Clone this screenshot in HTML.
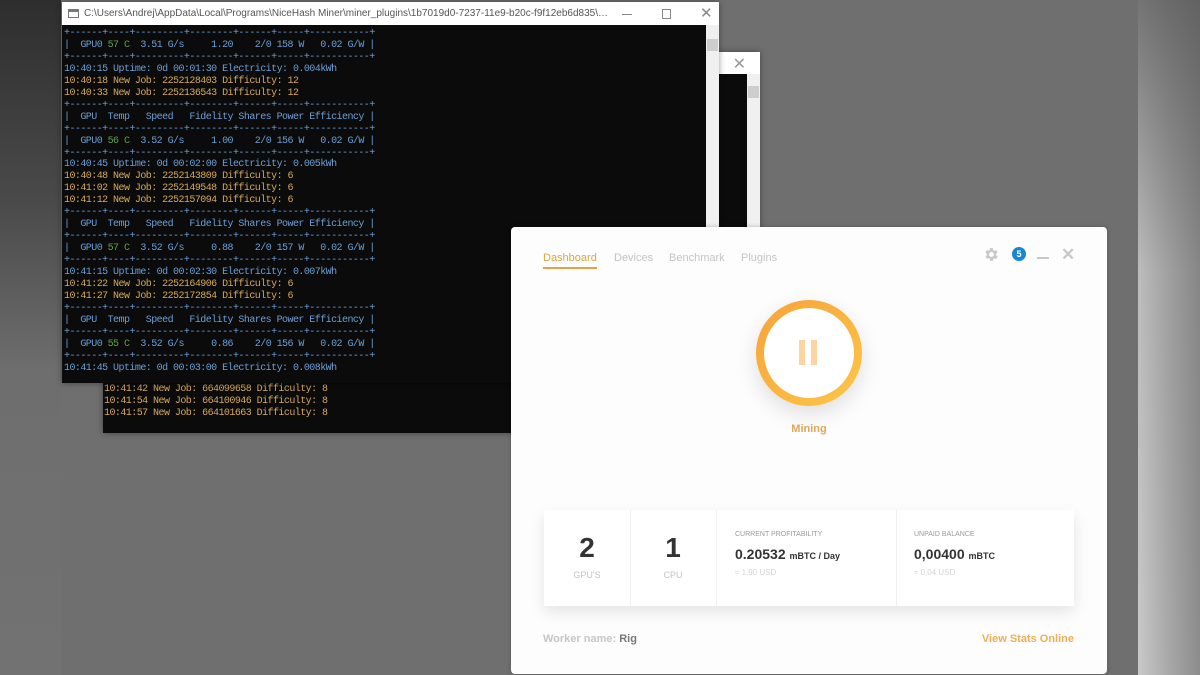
<!DOCTYPE html>
<html><head><meta charset="utf-8"><style>
*{margin:0;padding:0;box-sizing:border-box}
body{width:1200px;height:675px;overflow:hidden;background:#6f6f6f;position:relative;font-family:"Liberation Sans",sans-serif}
.lstrip{position:absolute;left:0;top:0;width:61px;height:675px;background:linear-gradient(180deg,#2e2e2e 0%,#4a4a4a 30%,#6e6e6e 55%,#727272 100%)}
.rstrip{position:absolute;left:1138px;top:0;width:62px;height:675px;background:linear-gradient(90deg,#c9c9c9 0%,#a8a8a8 50%,#8c8c8c 100%)}
.rstrip:after{content:"";position:absolute;inset:0;background:linear-gradient(180deg,rgba(80,80,80,.7) 0%,rgba(80,80,80,.1) 40%,rgba(0,0,0,0) 100%)}
.win{position:absolute;background:#fff;box-shadow:0 0 6px rgba(0,0,0,.4)}
.con{position:absolute;background:#0b0b0b}
.sb{position:absolute;background:#f0f0f0}
pre{font-family:"Liberation Mono",monospace;font-size:10px;letter-spacing:-0.55px;line-height:11.96px;color:#6b9fd8;white-space:pre}
.y{color:#d6a95c}.g{color:#5fa24e}
.title{position:absolute;left:22px;top:6px;width:528px;overflow:hidden;text-overflow:ellipsis;font-size:10px;color:#555;white-space:nowrap}
.nh{position:absolute;left:511px;top:227px;width:596px;height:447px;background:#fdfdfd;border-radius:4px;box-shadow:0 0 4px rgba(0,0,0,.25)}
.tab{position:absolute;top:25px;font-size:11px;color:#c4c4c4}
</style></head><body>
<div class="lstrip"></div><div class="rstrip"></div>

<!-- console 2 -->
<div class="win" style="left:103px;top:52px;width:657px;height:381px">
  <div style="position:absolute;right:14px;top:2px;font-size:16px;color:#999">✕</div>
  <div class="con" style="left:0;top:22px;width:644px;height:359px">
    <pre style="position:absolute;left:1px;top:310px" class="y">10:41:42 New Job: 664099658 Difficulty: 8
10:41:54 New Job: 664100946 Difficulty: 8
10:41:57 New Job: 664101663 Difficulty: 8</pre>
  </div>
  <div class="sb" style="left:644px;top:22px;width:13px;height:359px"><div style="margin:12px 1px 0;height:12px;background:#cdcdcd"></div></div>
</div>

<!-- console 1 -->
<div class="win" style="left:62px;top:2px;width:657px;height:381px">
  <div style="position:absolute;left:6px;top:7px;width:11px;height:9px;border:1px solid #777;border-top-width:3px"></div>
  <div class="title">C:\Users\Andrej\AppData\Local\Programs\NiceHash Miner\miner_plugins\1b7019d0-7237-11e9-b20c-f9f12eb6d835\bins\6.3\miner...</div>
  <div style="position:absolute;left:560px;top:12px;width:10px;height:1px;background:#888"></div>
  <div style="position:absolute;left:600px;top:7px;width:9px;height:10px;border:1px solid #888"></div>
  <div style="position:absolute;left:638px;top:2px;font-size:15px;color:#888">✕</div>
  <div class="con" style="left:0;top:23px;width:644px;height:358px">
<pre style="position:absolute;left:2px;top:3px">+------+----+---------+--------+------+-----+-----------+
|  GPU0 <span class="g">57 C</span>  3.51 G/s     1.20    2/0 158 W   0.02 G/W |
+------+----+---------+--------+------+-----+-----------+
10:40:15 Uptime: 0d 00:01:30 Electricity: 0.004kWh
<span class="y">10:40:18 New Job: 2252128403 Difficulty: 12
10:40:33 New Job: 2252136543 Difficulty: 12</span>
+------+----+---------+--------+------+-----+-----------+
|  GPU  Temp   Speed   Fidelity Shares Power Efficiency |
+------+----+---------+--------+------+-----+-----------+
|  GPU0 <span class="g">56 C</span>  3.52 G/s     1.00    2/0 156 W   0.02 G/W |
+------+----+---------+--------+------+-----+-----------+
10:40:45 Uptime: 0d 00:02:00 Electricity: 0.005kWh
<span class="y">10:40:48 New Job: 2252143809 Difficulty: 6
10:41:02 New Job: 2252149548 Difficulty: 6
10:41:12 New Job: 2252157094 Difficulty: 6</span>
+------+----+---------+--------+------+-----+-----------+
|  GPU  Temp   Speed   Fidelity Shares Power Efficiency |
+------+----+---------+--------+------+-----+-----------+
|  GPU0 <span class="g">57 C</span>  3.52 G/s     0.88    2/0 157 W   0.02 G/W |
+------+----+---------+--------+------+-----+-----------+
10:41:15 Uptime: 0d 00:02:30 Electricity: 0.007kWh
<span class="y">10:41:22 New Job: 2252164906 Difficulty: 6
10:41:27 New Job: 2252172854 Difficulty: 6</span>
+------+----+---------+--------+------+-----+-----------+
|  GPU  Temp   Speed   Fidelity Shares Power Efficiency |
+------+----+---------+--------+------+-----+-----------+
|  GPU0 <span class="g">55 C</span>  3.52 G/s     0.86    2/0 156 W   0.02 G/W |
+------+----+---------+--------+------+-----+-----------+
10:41:45 Uptime: 0d 00:03:00 Electricity: 0.008kWh</pre>
  </div>
  <div class="sb" style="left:644px;top:23px;width:13px;height:358px"><div style="margin:14px 1px 0;height:12px;background:#cdcdcd"></div></div>
</div>

<!-- NiceHash -->
<div class="nh">
  <div class="tab" style="left:32px;color:#e3a243">Dashboard<div style="height:1.5px;background:#e3a243;margin-top:3px"></div></div>
  <div class="tab" style="left:103px">Devices</div>
  <div class="tab" style="left:158px">Benchmark</div>
  <div class="tab" style="left:230px">Plugins</div>
  <svg style="position:absolute;left:472px;top:19px" width="17" height="17" viewBox="0 0 24 24"><path fill="#c8c8c8" d="M19.4 13a7.5 7.5 0 0 0 0-2l2.1-1.6-2-3.5-2.5 1a7.6 7.6 0 0 0-1.7-1L15 3h-4l-.4 2.7a7.6 7.6 0 0 0-1.7 1l-2.5-1-2 3.5L6.6 11a7.5 7.5 0 0 0 0 2l-2.1 1.6 2 3.5 2.5-1a7.6 7.6 0 0 0 1.7 1L11 21h4l.4-2.7a7.6 7.6 0 0 0 1.7-1l2.5 1 2-3.5zM13 15.5a3.5 3.5 0 1 1 0-7 3.5 3.5 0 0 1 0 7z" transform="translate(-1 0)"/></svg>
  <div style="position:absolute;left:501px;top:20px;width:14px;height:14px;border-radius:50%;background:#1a86d0;color:#fff;font-size:9px;font-weight:bold;text-align:center;line-height:14px">5</div>
  <div style="position:absolute;left:526px;top:30px;width:12px;height:2px;background:#c8c8c8"></div>
  <div style="position:absolute;left:550px;top:18px;font-size:17px;color:#c8c8c8;font-weight:bold">✕</div>

  <div style="position:absolute;left:245px;top:73px;width:106px;height:106px;border-radius:50%;background:linear-gradient(135deg,#f7a23a,#fcc648);box-shadow:0 8px 22px rgba(0,0,0,.12)"></div>
  <div style="position:absolute;left:253px;top:81px;width:90px;height:90px;border-radius:50%;background:#fff"></div>
  <div style="position:absolute;left:288px;top:113px;width:6px;height:25px;background:#fbd4a2"></div>
  <div style="position:absolute;left:300px;top:113px;width:6px;height:25px;background:#fbd4a2"></div>
  <div style="position:absolute;left:0;width:596px;top:196px;text-align:center;font-size:11px;font-weight:bold;color:#e0a55a">Mining</div>

  <div style="position:absolute;left:33px;top:283px;width:530px;height:96px;background:#fff;box-shadow:0 6px 14px rgba(0,0,0,.1)">
    <div style="position:absolute;left:86px;top:0;width:1px;height:96px;background:#f0f0f0"></div>
    <div style="position:absolute;left:172px;top:0;width:1px;height:96px;background:#f0f0f0"></div>
    <div style="position:absolute;left:352px;top:0;width:1px;height:96px;background:#f0f0f0"></div>
    <div style="position:absolute;left:0;width:86px;top:22px;text-align:center;font-size:28px;font-weight:bold;color:#333">2</div>
    <div style="position:absolute;left:0;width:86px;top:60px;text-align:center;font-size:9px;color:#c4c4c4">GPU'S</div>
    <div style="position:absolute;left:86px;width:86px;top:22px;text-align:center;font-size:28px;font-weight:bold;color:#333">1</div>
    <div style="position:absolute;left:86px;width:86px;top:60px;text-align:center;font-size:9px;color:#c4c4c4">CPU</div>
    <div style="position:absolute;left:191px;top:21px;font-size:7px;color:#999">CURRENT PROFITABILITY</div>
    <div style="position:absolute;left:191px;top:36px;font-size:14px;font-weight:bold;color:#333">0.20532 <span style="font-size:9px">mBTC / Day</span></div>
    <div style="position:absolute;left:191px;top:58px;font-size:8px;color:#d4d4d4">≈ 1.90 USD</div>
    <div style="position:absolute;left:370px;top:21px;font-size:7px;color:#999">UNPAID BALANCE</div>
    <div style="position:absolute;left:370px;top:36px;font-size:14px;font-weight:bold;color:#333">0,00400 <span style="font-size:9px">mBTC</span></div>
    <div style="position:absolute;left:370px;top:58px;font-size:8px;color:#d4d4d4">≈ 0,04 USD</div>
  </div>
  <div style="position:absolute;left:32px;top:406px;font-size:11px;font-weight:bold;color:#c6c6c6">Worker name: <span style="color:#777">Rig</span></div>
  <div style="position:absolute;right:33px;top:406px;font-size:11px;font-weight:bold;color:#eeae55">View Stats Online</div>
</div>
</body></html>
